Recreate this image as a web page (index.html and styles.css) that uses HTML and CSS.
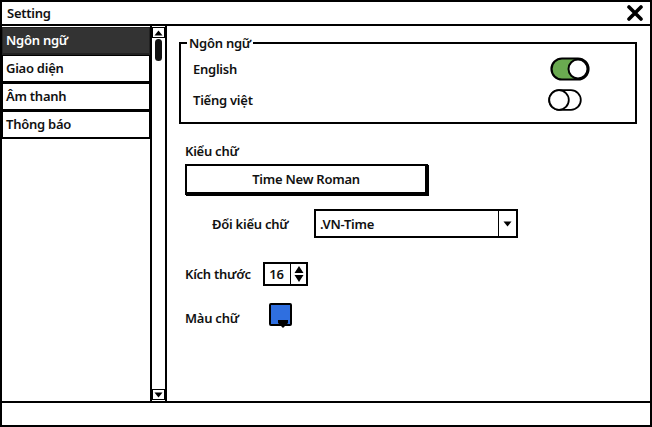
FILE: index.html
```html
<!DOCTYPE html>
<html lang="vi">
<head>
<meta charset="utf-8">
<title>Setting</title>
<link rel="stylesheet" href="styles.css">
</head>
<body>
<div class="window">
  <div class="titlebar">
    <span class="title">Setting</span>
    <svg class="close" width="16" height="16" viewBox="0 0 16 16"><path d="M2 2 L14 14 M14 2 L2 14" stroke="#000" stroke-width="3.6" stroke-linecap="round"/></svg>
  </div>
  <div class="main">
    <ul class="sidebar">
      <li class="item active">Ngôn ngữ</li>
      <li class="item">Giao diện</li>
      <li class="item">Âm thanh</li>
      <li class="item">Thông báo</li>
    </ul>
    <div class="scrollbar">
      <div class="sb-btn"><svg width="9" height="6" viewBox="0 0 9 6"><path d="M0.5 5.5 L4.5 0.5 L8.5 5.5 Z" fill="#000"/></svg></div>
      <div class="sb-track"><div class="sb-thumb"></div></div>
      <div class="sb-btn"><svg width="9" height="6" viewBox="0 0 9 6"><path d="M0.5 0.5 L4.5 5.5 L8.5 0.5 Z" fill="#000"/></svg></div>
    </div>
    <div class="content">
      <fieldset class="group">
        <legend>Ngôn ngữ</legend>
        <div class="lang-row row-en">
          <span>English</span>
          <svg class="toggle-on" width="40" height="24" viewBox="0 0 40 24"><rect x="1.5" y="1.5" width="37" height="21" rx="10.5" fill="#6aaa50" stroke="#000" stroke-width="2.2"/><circle cx="28" cy="12" r="9.5" fill="#fff" stroke="#000" stroke-width="2"/></svg>
        </div>
        <div class="lang-row row-vi">
          <span>Tiếng việt</span>
          <svg class="toggle-off" width="34" height="22" viewBox="0 0 34 22"><rect x="1.2" y="1.2" width="31.6" height="19.6" rx="9.8" fill="#fff" stroke="#000" stroke-width="1.8"/><circle cx="11" cy="11" r="9.8" fill="#fff" stroke="#000" stroke-width="1.8"/></svg>
        </div>
      </fieldset>
      <div class="label-row">Kiểu chữ</div>
      <button class="font-btn">Time New Roman</button>
      <div class="combo-row">
        <span class="combo-label">Đổi kiểu chữ</span>
        <div class="combo">
          <span class="combo-text">.VN-Time</span>
          <span class="combo-arrow"><svg width="9" height="6" viewBox="0 0 9 6"><path d="M0.5 0.5 L4.5 5.5 L8.5 0.5 Z" fill="#000"/></svg></span>
        </div>
      </div>
      <div class="size-row">
        <span class="size-label">Kích thước</span>
        <div class="spinner">
          <span class="spin-val">16</span>
          <span class="spin-arrows"><svg width="12" height="20" viewBox="0 0 12 20"><path d="M1.5 9 L6 2 L10.5 9 Z M1.5 11 L6 18 L10.5 11 Z" fill="#000"/></svg></span>
        </div>
      </div>
      <div class="color-row">
        <span class="color-label">Màu chữ</span>
        <div class="swatch"><svg class="swatch-tri" width="10" height="8" viewBox="0 0 10 8"><path d="M0 0 L10 0 L10 3 L5 8 L0 3 Z" fill="#000"/></svg></div>
      </div>
    </div>
  </div>
  <div class="statusbar"></div>
</div>
</body>
</html>
```
FILE: styles.css
```css
* { box-sizing: border-box; }
html, body { margin: 0; padding: 0; background: #fff; }
body {
  font-family: "Noto Sans", "Open Sans", sans-serif;
  font-size: 13px;
  font-weight: 600;
  letter-spacing: -0.25px;
  color: #111;
}
.window {
  width: 652px;
  height: 427px;
  border: 2px solid #000;
  display: flex;
  flex-direction: column;
}
.titlebar {
  height: 24px;
  border-bottom: 2px solid #000;
  display: flex;
  align-items: center;
  justify-content: space-between;
  padding: 0 7px 0 5px;
  flex: none;
}
.title { line-height: 20px; margin-top: -1px; }
.main {
  flex: 1;
  display: flex;
  min-height: 0;
}
.sidebar {
  list-style: none;
  margin: 0;
  padding: 0;
  width: 148px;
  flex: none;
}
.item {
  height: 28px;
  border: 1px solid #000;
  border-bottom-width: 2px;
  padding: 0 0 2px 3px;
  display: flex;
  align-items: center;
  background: #fff;
}
.item:first-child { margin-top: 1px; }
.item.active {
  background: #333;
  color: #fff;
  border-color: #222;
}
.scrollbar {
  width: 17px;
  flex: none;
  border-left: 2px solid #000;
  border-right: 2px solid #000;
  display: flex;
  flex-direction: column;
  padding: 1px 0;
}
.sb-btn {
  height: 11px;
  border: 1px solid #000;
  display: flex;
  align-items: center;
  justify-content: center;
  flex: none;
}
.sb-track {
  flex: 1;
  padding: 1px 3px;
}
.sb-thumb {
  width: 7px;
  height: 22px;
  background: #111;
  border-radius: 4px;
}
.content {
  flex: 1;
  display: flex;
  flex-direction: column;
  align-items: flex-start;
}
.group {
  margin: 9px 13px 0 12px;
  align-self: stretch;
  height: 89px;
  border: 2px solid #000;
  padding: 0;
}
.group legend {
  padding: 0 2px;
  margin-left: 6px;
  line-height: 16px;
}
.lang-row {
  display: flex;
  align-items: center;
  justify-content: space-between;
  width: 397px;
  margin-left: 12px;
}
.row-en { height: 24px; margin-top: 6px; }
.row-vi { height: 22px; margin-top: 8px; padding-right: 8px; }
.label-row {
  margin: 17px 0 0 18px;
  height: 20px;
  line-height: 20px;
}
.font-btn {
  margin: 3px 0 0 18px;
  width: 243px;
  height: 31px;
  border: 2px solid #000;
  border-right-width: 3px;
  border-bottom-width: 3px;
  background: #fff;
  font: inherit;
  letter-spacing: inherit;
  color: #111;
  padding: 0;
  box-shadow: 1px 1px 0 #000;
}
.combo-row {
  margin: 14px 0 0 45px;
  display: flex;
  align-items: center;
  height: 29px;
}
.combo-label { width: 102px; }
.combo {
  width: 204px;
  height: 29px;
  border: 2px solid #000;
  display: flex;
  align-items: center;
}
.combo-text { flex: 1; padding-left: 4px; }
.combo-arrow {
  width: 18px;
  height: 100%;
  border-left: 1px solid #000;
  display: flex;
  align-items: center;
  justify-content: center;
}
.size-row {
  margin: 24px 0 0 18px;
  display: flex;
  align-items: center;
  height: 24px;
}
.size-label { width: 78px; }
.spinner {
  width: 45px;
  height: 24px;
  border: 2px solid #000;
  display: flex;
}
.spin-val {
  flex: 1;
  display: flex;
  align-items: center;
  justify-content: center;
  padding-right: 2px;
}
.spin-arrows {
  width: 16px;
  border-left: 1px solid #000;
  display: flex;
  align-items: center;
  justify-content: center;
}
.color-row {
  margin: 17px 0 0 18px;
  display: flex;
  align-items: flex-start;
  height: 26px;
}
.color-label { width: 84px; margin-top: 6px; }
.swatch {
  width: 23px;
  height: 23px;
  background: #2f6fe0;
  border: 2px solid #000;
  border-radius: 2px;
  display: flex;
  align-items: flex-end;
  justify-content: flex-end;
}
.swatch-tri { margin: 0 2px -4px 0; }
.statusbar {
  height: 24px;
  border-top: 2px solid #000;
  flex: none;
}
```
